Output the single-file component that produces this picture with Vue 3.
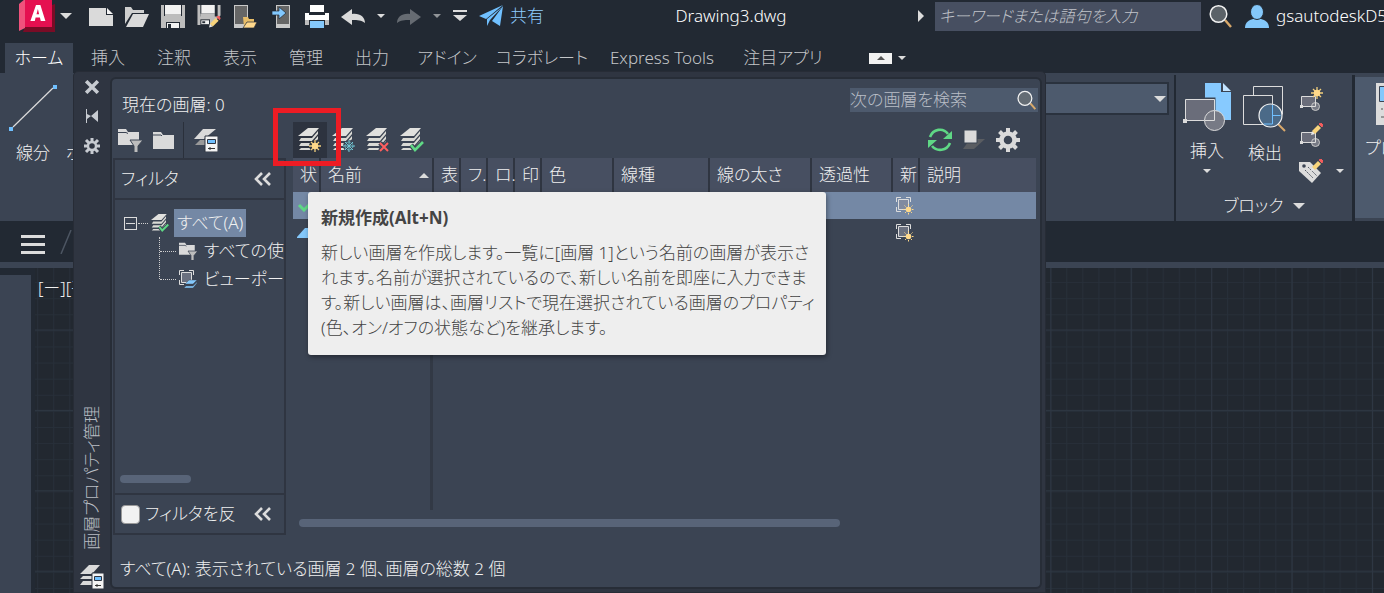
<script setup>
import { ref } from 'vue'

const files = ['new', 'open', 'save', 'saveas', 'devopen', 'device', 'print', 'undo']
const fileLabels = ['新規', '開く', '保存', '名前を付けて保存', 'モバイルから開く', 'モバイルに保存', '印刷', '元に戻す']
const tabs = ['挿入', '注釈', '表示', '管理', '出力', 'アドイン', 'コラボレート', 'Express Tools', '注目アプリ']
const columns = [
  { name: '状', cls: 'c-s' },
  { name: '名前', cls: 'c-name', sort: true },
  { name: '表', cls: 'c-s' },
  { name: 'フ.', cls: 'c-s' },
  { name: 'ロ.', cls: 'c-s' },
  { name: '印', cls: 'c-s' },
  { name: '色', cls: 'c-color' },
  { name: '線種', cls: 'c-type' },
  { name: '線の太さ', cls: 'c-weight' },
  { name: '透過性', cls: 'c-trans' },
  { name: '新', cls: 'c-s' },
  { name: '説明', cls: 'c-desc' }
]
const rows = [
  { icon: 'check', selected: true },
  { icon: 'layerblue', selected: false }
]
const invert = ref(false)
const query = ref('')
const layerQuery = ref('')
</script>

<template>
  <div class="app">
    <svg class="sprite" aria-hidden="true">
      <defs>
        <symbol id="caret" viewBox="0 0 12 6"><path d="M0 0h12L6 6z" fill="#dcdcdc" /></symbol>
        <symbol id="logo" viewBox="0 0 36 32">
          <path d="M33 5l3-1v28H4l2-5z" fill="#7a0c26" />
          <path d="M0 4l6-5v29l-6 3z" fill="#f0527c" />
          <path d="M6-1h27v28H6z" fill="#e51050" />
          <path d="M17 5h4.400l5 16h-4.600l-.9-3.500h-4.300L15.800 21h-4.400zM17.500 14.200h2.600L18.900 9z" fill="#fff" fill-rule="evenodd" />
        </symbol>
        <symbol id="new" viewBox="0 0 24 24"><path d="M0 4h17v7h7v11H0z" fill="#dadada" /><path d="M18 4l6 6h-6z" fill="#f4f4f4" /></symbol>
        <symbol id="open" viewBox="0 0 24 24"><path d="M0 3h6l2 3h11v3H7L0 20z" fill="#cfcfcf" /><path d="M8 10h16l-6 13H1z" fill="#dadada" /></symbol>
        <symbol id="save" viewBox="0 0 24 24"><path d="M0 1h3v12h18V1h3v24H0z" fill="#bdbdbd" /><path d="M4 1h16v9H4z" fill="#f2f2f2" /><path d="M4 10h16v2H4zM3 12h18v6H3z" fill="#bdbdbd" /><path d="M5 18h14v7H5z" fill="#232a33" /><path d="M6 19h12v5H6z" fill="#f2f2f2" /><path d="M7 20h3v4H7z" fill="#232a33" /></symbol>
        <symbol id="pencil" viewBox="0 0 12 12"><path d="M0 12l1-4 3 3z" fill="#e6e6e6" /><path d="M1 8l6-6 3 3-6 6z" fill="#f8d47c" /><path d="M8 1l2-1 2 2-1 2z" fill="#f45d5d" stroke="#f45d5d" /></symbol>
        <symbol id="saveas" viewBox="0 0 24 25"><path d="M0 1h3v12h18V1h3v11l-10 10H0z" fill="#bdbdbd" /><path d="M4 1h14v9H4z" fill="#f2f2f2" /><path d="M3 10h15v5H3z" fill="#bdbdbd" /><path d="M3 16h10v6H3z" fill="#232a33" /><path d="M4 17h8v4H4z" fill="#f2f2f2" /><path d="M5 18h3v2H5z" fill="#232a33" /><use href="#pencil" x="12" y="12" width="12" height="13" /></symbol>
        <symbol id="devopen" viewBox="0 0 24 24"><path d="M1 1h14v23H1z" fill="#c9c9c9" /><path d="M2 2h12v18H2z" fill="#666" /><path d="M10 13h5l1 2h5v3h-7l-3 5z" fill="#e8bd68" /><path d="M14 18h10l-3 6H10z" fill="#ffd88c" stroke="#232a33" stroke-width=".7" /></symbol>
        <symbol id="device" viewBox="0 0 24 24"><path d="M7 1h14v23H7z" fill="#c9c9c9" /><path d="M8 2h12v18H8z" fill="#666" /><path d="M3 7h7V3l7 6-7 6v-4H3z" fill="#82c8ff" stroke="#232a33" stroke-width=".7" /></symbol>
        <symbol id="print" viewBox="0 0 24 24"><path d="M5 1h14v7H5z" fill="#fff" /><path d="M0 9h4v2h16V9h4v8H0z" fill="#fff" /><path d="M0 16h24v5H0z" fill="#bdbdbd" /><path d="M4 16h16v10H4z" fill="#232a33" /><path d="M5 17h14v7H5z" fill="#84c8fb" /></symbol>
        <symbol id="undo" viewBox="0 0 24 24"><path d="M0 13l11-8v5c8-1 13 3 13 9-4-3-7-3-13-3v5z" fill="#dadada" /></symbol>
        <symbol id="redo" viewBox="0 0 24 24"><path d="M24 13L13 5v5C5 9 0 13 0 19c4-3 7-3 13-3v5z" fill="#666b72" /></symbol>
        <symbol id="custom" viewBox="0 0 14 12"><path d="M0 0h14v2H0zM0 5h14L7 11z" fill="#dcdcdc" /></symbol>
        <symbol id="plane" viewBox="0 0 24 22"><path d="M24 0L0 11l7 3zM23 2L8 14v7l3-6zM24 1L13 16l8 5z" fill="#70c0ff" /></symbol>
        <symbol id="mag" viewBox="0 0 24 24"><path d="M16 16l6 7" stroke="#d9a96b" stroke-width="2.400" /><circle cx="9.500" cy="10" r="8.300" fill="#6a7076" fill-opacity=".8" stroke="#f2f2f2" stroke-width="1.500" /></symbol>
        <symbol id="person" viewBox="0 0 24 24"><path d="M0 24c0-6 4-8 8-9h8c4 1 8 3 8 9z" fill="#84c8fb" /><ellipse cx="12" cy="8" rx="6.500" ry="7.500" fill="#84c8fb" stroke="#232a33" /></symbol>
        <symbol id="line" viewBox="0 0 48 48"><path d="M4 42L44 3" stroke="#dcdcdc" stroke-width="1.200" /><path d="M0 42h4v4H0zM44 0h4v4h-4z" fill="#70c0ff" /></symbol>
        <symbol id="insert" viewBox="0 0 48 48"><path d="M22 0h16v9h10v28H22z" fill="#87caff" /><path d="M40 0l8 8h-8z" fill="#c3e4ff" /><path d="M2 16h29v22H2z" fill="#6a6d7a" stroke="#3b4453" stroke-width="3" /><path d="M2.500 16.500h29v21h-29z" fill="#6a6d7a" stroke="#dcdcdc" /><circle cx="31.500" cy="37.500" r="10" fill="#777a85" stroke="#dcdcdc" /><path d="M31.500 28v9.500H22" fill="none" stroke="#dcdcdc" /><path d="M0 36h4v4H0z" fill="#dcdcdc" /></symbol>
        <symbol id="detect" viewBox="0 0 44 48"><path d="M10.500 10V1.500h29v28M.5 10.500h29v29H.5z" fill="none" stroke="#dcdcdc" /><path d="M34 38l8 8" stroke="#d9a96b" stroke-width="2" /><circle cx="27.500" cy="30.500" r="11.500" fill="#4b6a88" stroke="#f2f2f2" stroke-width="1.200" /><path d="M29.500 20v19H21M29.500 30.500h8" fill="none" stroke="#70c0ff" /></symbol>
        <symbol id="sun" viewBox="0 0 12 12"><path d="M6 0v12M0 6h12M2 2l8 8M10 2l-8 8" stroke="#f3cf7c" stroke-width="1.300" /><circle cx="6" cy="6" r="3.200" fill="#ffd98a" /></symbol>
        <symbol id="block" viewBox="0 0 24 24"><path d="M2.500 9.500h14v10h-14z" fill="#6a6d7a" stroke="#dcdcdc" /><circle cx="16.500" cy="19.500" r="4" fill="#777a85" stroke="#c8c8c8" /><path d="M16.500 14v5.500H12" fill="none" stroke="#dcdcdc" /><path d="M1 18h3v3H1z" fill="#dcdcdc" /></symbol>
        <symbol id="blocknew" viewBox="0 0 24 24"><use href="#block" width="24" height="24" /><use href="#sun" x="12" y="0" width="12" height="12" /></symbol>
        <symbol id="blockedit" viewBox="0 0 24 24"><use href="#block" x="0" y="0" width="24" height="24" /><use href="#pencil" x="12" y="0" width="12" height="12" /></symbol>
        <symbol id="tag" viewBox="0 0 24 24"><path d="M0 3h11l11 11-9 10L0 12z" fill="#dcdcdc" /><circle cx="5" cy="7" r="1.800" fill="#3b4453" /><path d="M6 11l8 8M9 8l9 9" stroke="#555b66" stroke-dasharray="2 1" /><use href="#pencil" x="12" y="0" width="12" height="12" /></symbol>
        <symbol id="prop" viewBox="0 0 24 42"><path d="M0 0h24v42H0z" fill="#dcdcdc" /><path d="M3.500 3.500H24v15H3.500z" fill="#84c8fb" stroke="#3b4453" /><path d="M5 26h2m2 0h8M5 34h8" stroke="#555" /></symbol>
        <symbol id="x" viewBox="0 0 12 12"><path d="M1 1l10 10M11 1L1 11" stroke="#c7cbd1" stroke-width="3" /></symbol>
        <symbol id="dock" viewBox="0 0 14 14"><path d="M1.500 0v14" stroke="#c7cbd1" /><path d="M2 5l4 2-4 3zM13 1v12L6 7z" fill="#c7cbd1" /></symbol>
        <symbol id="gear" viewBox="0 0 24 24"><path d="M12 0v24M0 12h24M3.500 3.500l17 17M20.500 3.500l-17 17" stroke="#dadada" stroke-width="4" /><circle cx="12" cy="12" r="6.500" fill="#3b4453" stroke="#dadada" stroke-width="4.500" /></symbol>
        <symbol id="gears" viewBox="0 0 16 16"><path d="M8 0v4M8 12v4M0 8h4M12 8h4M2 2l3 3M14 2l-3 3M2 14l3-3M14 14l-3-3" stroke="#c7cbd1" stroke-width="3" /><circle cx="8" cy="8" r="4" fill="#2f3541" stroke="#c7cbd1" stroke-width="2.400" /></symbol>
        <symbol id="folder" viewBox="0 0 24 24"><path d="M1 4h8l2 3h11v14H1z" fill="#dadada" /><path d="M1 7h8l1 1" fill="none" stroke="#3b4453" /></symbol>
        <symbol id="ffilter" viewBox="0 0 24 24"><path d="M0 1h8l2 3h11v13H0z" fill="#dadada" /><path d="M0 4.500h8l2 1" fill="none" stroke="#3b4453" /><path d="M12 12h13l-5 6v7h-4v-7z" fill="#bdbdbd" stroke="#3b4453" /></symbol>
        <symbol id="lprops" viewBox="0 0 24 24"><path d="M9 1h13L10 11H0z" fill="#dadada" /><path d="M6 12h7v5H1z" fill="#999" /><path d="M11 8h13v16H11z" fill="#f4f4f4" stroke="#2f3541" /><path d="M13.500 11.500h8v4h-8z" fill="#70c0ff" stroke="#2f3541" /><path d="M14 20.500h7M16 19v3" stroke="#333" /></symbol>
        <symbol id="layers" viewBox="0 0 24 24"><path d="M10 0h11l-7 8H0z" fill="#e1e1de" /><path d="M3 10h11l6-7v3l-6 7H1zM3 15h11l6-7v3l-6 7H1zM3 20h11l6-7v3l-6 6H1z" fill="#dadad5" /></symbol>
        <symbol id="snow" viewBox="0 0 12 12"><path d="M6 0v12M0 6h12M2 2l8 8M10 2l-8 8" stroke="#72c6d4" /><circle cx="6" cy="6" r="4" fill="none" stroke="#72c6d4" stroke-dasharray="2 1" /></symbol>
        <symbol id="lnew" viewBox="0 0 24 24"><use href="#layers" width="24" height="24" /><circle cx="17" cy="18" r="6" fill="#2f3541" /><use href="#sun" x="11" y="12" width="12" height="12" /></symbol>
        <symbol id="lsnow" viewBox="0 0 24 24"><use href="#layers" width="24" height="24" /><circle cx="17" cy="18" r="6" fill="#3b4453" /><use href="#snow" x="11" y="12" width="12" height="12" /></symbol>
        <symbol id="ldel" viewBox="0 0 24 24"><use href="#layers" width="24" height="24" /><path d="M14 15l8 8M22 15l-8 8" stroke="#3b4453" stroke-width="5" /><path d="M14 15l8 8M22 15l-8 8" stroke="#ff5f5f" stroke-width="2" /></symbol>
        <symbol id="lcur" viewBox="0 0 24 24"><use href="#layers" width="24" height="24" /><path d="M11 17l4 5 8-8" fill="none" stroke="#3b4453" stroke-width="5" /><path d="M11 17l4 5 8-8" fill="none" stroke="#5fd885" stroke-width="2.600" /></symbol>
        <symbol id="refresh" viewBox="0 0 24 24"><path d="M2 9C5 1 15-1 20 6M22 15c-3 8-13 9-18 3" fill="none" stroke="#5fd885" stroke-width="2.600" /><path d="M24 3v8h-9zM0 12h9l-9 8z" fill="#5fd885" /></symbol>
        <symbol id="lmode" viewBox="0 0 24 24"><path d="M8 11h15L12 21H1z" fill="#5a5d62" /><path d="M2 2h13v13H2z" fill="#dadada" stroke="#3b4453" /></symbol>
        <symbol id="chev" viewBox="0 0 18 14"><path d="M8 1L2 7l6 6M16 1l-6 6 6 6" fill="none" stroke="#dcdcdc" stroke-width="2.600" /></symbol>
        <symbol id="check" viewBox="0 0 18 12"><path d="M2 5l5 5 9-9" fill="none" stroke="#5fd885" stroke-width="3" /></symbol>
        <symbol id="layerblue" viewBox="0 0 18 12"><path d="M8 1h12l-8 10H-1z" fill="#84c8fb" /></symbol>
        <symbol id="vp" viewBox="0 0 18 18"><path d="M.5 5V.5H5M10 .5h4.500V5M.5 10v4.500H5" fill="none" stroke="#dcdcdc" /><path d="M2.500 2.500h10v10h-10z" fill="#8a8e9c" fill-opacity=".6" stroke="#dcdcdc" /></symbol>
        <symbol id="vpsun" viewBox="0 0 18 18"><use href="#vp" width="18" height="18" /><path d="M12.500 7v11M7 12.500h11M8.500 8.500l8 8M16.500 8.500l-8 8" stroke="#ffd98a" stroke-dasharray="1.500 1.500" /><circle cx="12.500" cy="12.500" r="2.800" fill="#ffd98a" /></symbol>
        <symbol id="vpl" viewBox="0 0 18 18"><use href="#vp" width="18" height="18" /><path d="M10 10h8l-4 4H6zM7 16h7l4-4v1l-4 5H5z" fill="#84c8fb" stroke="#3b4453" stroke-width=".4" /></symbol>
        <symbol id="lpal" viewBox="0 0 24 24"><path d="M9 0h11l-8 9H0zM3 11h9v3H0zM3 16h9v4H0z" fill="#dadada" /><path d="M12 8h12v16H12z" fill="#f4f4f4" stroke="#2f3541" /><path d="M14.500 11.500h7v4h-7z" fill="#70c0ff" stroke="#2f3541" /><path d="M15 20.500h6M17 19v3" stroke="#333" /></symbol>
      </defs>
    </svg>

    <header class="titlebar">
      <div class="quick">
        <button class="logo" aria-label="アプリケーション メニュー"><svg class="i-logo"><use href="#logo" /></svg><svg class="i-caret"><use href="#caret" /></svg></button>
        <button v-for="(f, i) in files" :key="f" :aria-label="fileLabels[i]"><svg class="i24"><use :href="'#' + f" /></svg></button>
        <button aria-label="元に戻す履歴"><svg class="i-caret-s"><use href="#caret" /></svg></button>
        <button aria-label="やり直し"><svg class="i24"><use href="#redo" /></svg></button>
        <button class="dim" aria-label="やり直し履歴"><svg class="i-caret-s"><use href="#caret" /></svg></button>
        <button aria-label="カスタマイズ"><svg class="i-custom"><use href="#custom" /></svg></button>
        <button class="share"><svg class="i24"><use href="#plane" /></svg>共有</button>
      </div>
      <div class="doc-title">Drawing3.dwg</div>
      <div class="account">
        <button class="expand" aria-label="展開"><svg viewBox="0 0 6 12"><path d="M0 0l6 6-6 6z" fill="#dcdcdc" /></svg></button>
        <input v-model="query" class="keyword" type="text" aria-label="キーワード検索" placeholder="キーワードまたは語句を入力">
        <button aria-label="検索"><svg class="i24"><use href="#mag" /></svg></button>
        <button class="user"><svg class="i24"><use href="#person" /></svg>gsautodeskD5</button>
      </div>
    </header>

    <nav class="tabs">
      <button class="active">ホーム</button>
      <button v-for="t in tabs" :key="t">{{ t }}</button>
      <button class="mini" aria-label="リボンを最小化"><span><svg class="up" viewBox="0 0 8 4"><path d="M4 0l4 4H0z" fill="#555" /></svg></span></button>
      <button class="mini2" aria-label="最小化オプション"><svg class="i-caret-s"><use href="#caret" /></svg></button>
    </nav>

    <section class="ribbon">
      <div class="draw">
        <button class="linebtn"><svg class="i48"><use href="#line" /></svg>線分</button>
        <button class="polybtn">ポリライン</button>
      </div>
      <div class="combo-area"><button class="combo" aria-label="画層"><svg class="i-caret"><use href="#caret" /></svg></button></div>
      <div class="block-panel">
        <div class="block-tools">
          <button class="big"><svg class="i48"><use href="#insert" /></svg>挿入<svg class="i-caret-s"><use href="#caret" /></svg></button>
          <button class="big det"><svg class="i-det"><use href="#detect" /></svg>検出</button>
          <div class="small">
            <button aria-label="ブロック作成"><svg class="i24"><use href="#blocknew" /></svg></button>
            <button aria-label="ブロック編集"><svg class="i24"><use href="#blockedit" /></svg></button>
            <button class="tagbtn" aria-label="属性編集"><svg class="i24"><use href="#tag" /></svg><svg class="i-caret-s"><use href="#caret" /></svg></button>
          </div>
        </div>
        <button class="panel-title">ブロック<svg class="i-caret"><use href="#caret" /></svg></button>
      </div>
      <button class="prop"><svg class="i-prop"><use href="#prop" /></svg>プロパティ</button>
    </section>

    <div class="doc-tabs">
      <button aria-label="ファイル タブ メニュー"><span class="burger"><i></i><i></i><i></i></span></button>
      <svg class="slash" viewBox="0 0 12 24"><path d="M1 24L11 0" stroke="#4d5663" stroke-width="1.500" /></svg>
    </div>
    <main class="work">
      <aside class="side"></aside>
      <div class="canvas">
        <svg class="grid" aria-hidden="true">
          <defs>
            <pattern id="gmin" x="2.100" y="-2" width="16.080" height="16.100" patternUnits="userSpaceOnUse"><path d="M0 .5h16.100M.5 0v16.100" stroke="#272f39" /></pattern>
            <pattern id="gmaj" x="50.600" y="61.500" width="80.400" height="80.400" patternUnits="userSpaceOnUse"><path d="M0 .5h80.400M.5 0v80.400" stroke="#2e3743" /></pattern>
          </defs>
          <rect width="100%" height="100%" fill="url(#gmin)" /><rect width="100%" height="100%" fill="url(#gmaj)" />
        </svg>
        <span class="viewlabel">[ー][平面図]</span>
      </div>
    </main>

    <section class="palette">
      <div class="rail">
        <button aria-label="閉じる"><svg class="i-x"><use href="#x" /></svg></button>
        <button aria-label="自動的に隠す"><svg class="i-x"><use href="#dock" /></svg></button>
        <button aria-label="プロパティ"><svg class="i16"><use href="#gears" /></svg></button>
        <span class="rail-title">画層プロパティ管理</span>
        <svg class="i24"><use href="#lpal" /></svg>
      </div>
      <div class="pbody">
        <div class="current">
          <span>現在の画層: 0</span>
          <label class="lsearch"><input v-model="layerQuery" type="text" aria-label="画層を検索" placeholder="次の画層を検索"><svg class="i-mag"><use href="#mag" /></svg></label>
        </div>
        <div class="ptools">
          <div class="tl">
            <button aria-label="新規プロパティ フィルタ"><svg class="i24"><use href="#ffilter" /></svg></button>
            <button aria-label="新規グループ フィルタ"><svg class="i24"><use href="#folder" /></svg></button>
            <span class="vsep"></span>
            <button aria-label="画層状態管理"><svg class="i24"><use href="#lprops" /></svg></button>
          </div>
          <div class="tm">
            <button class="hot" aria-label="新規作成"><svg class="i24"><use href="#lnew" /></svg></button>
            <button aria-label="すべてのビューポートでフリーズ"><svg class="i24"><use href="#lsnow" /></svg></button>
            <button aria-label="画層を削除"><svg class="i24"><use href="#ldel" /></svg></button>
            <button aria-label="現在に設定"><svg class="i24"><use href="#lcur" /></svg></button>
          </div>
          <div class="tr">
            <button aria-label="更新"><svg class="i24"><use href="#refresh" /></svg></button>
            <button aria-label="画層モード"><svg class="i24"><use href="#lmode" /></svg></button>
            <button aria-label="設定"><svg class="i24"><use href="#gear" /></svg></button>
          </div>
        </div>
        <div class="pmain">
          <div class="filters">
            <div class="fhead">フィルタ<button aria-label="折りたたむ"><svg class="i-chev"><use href="#chev" /></svg></button></div>
            <div class="tree">
              <div class="node root"><span class="minus"></span><span class="dots"></span><svg class="i18"><use href="#lcur" /></svg><b>すべて(A)</b></div>
              <div class="kids">
                <div class="node"><span class="dots"></span><svg class="i18"><use href="#ffilter" /></svg><span>すべての使用中の画層</span></div>
                <div class="node"><span class="dots"></span><svg class="i18"><use href="#vpl" /></svg><span>ビューポート優先</span></div>
              </div>
              <div class="fscroll"></div>
            </div>
            <div class="ffoot"><label><input v-model="invert" type="checkbox">フィルタを反</label><button aria-label="フィルタを折りたたむ"><svg class="i-chev"><use href="#chev" /></svg></button></div>
          </div>
          <div class="list">
            <table>
              <thead><tr><th v-for="(c, i) in columns" :key="i" :class="c.cls"><div>{{ c.name }}<svg v-if="c.sort" class="sort" viewBox="0 0 10 5"><path d="M5 0l5 5H0z" fill="#dcdcdc" /></svg></div></th></tr></thead>
              <tbody>
                <tr v-for="r in rows" :key="r.icon" :class="{ sel: r.selected }">
                  <td><svg class="i-st"><use :href="'#' + r.icon" /></svg></td>
                  <td v-for="n in 9" :key="n"></td>
                  <td><svg class="i18"><use href="#vpsun" /></svg></td><td></td>
                </tr>
              </tbody>
            </table>
            <div class="rest"></div>
            <div class="hscroll"><div></div></div>
          </div>
        </div>
        <footer class="status">すべて(A): 表示されている画層 2 個、画層の総数 2 個</footer>
      </div>
    </section>

    <div class="highlight"></div>
    <div class="tip" role="tooltip">
      <h2>新規作成(Alt+N)</h2>
      <p>新しい画層を作成します。一覧に[画層 1]という名前の画層が表示さ<br>れます。名前が選択されているので、新しい名前を即座に入力できま<br>す。新しい画層は、画層リストで現在選択されている画層のプロパティ<br>(色、オン/オフの状態など)を継承します。</p>
    </div>
  </div>
</template>

<style>
body { background: #222933; }
</style>

<style scoped>
.app, .app * { box-sizing: border-box; }
.app {
  position: relative; min-height: 100vh; overflow: hidden; display: flex; flex-direction: column;
  background: #222933; color: #f0f0f0; font-family: "Noto Sans", "Noto Sans CJK JP", sans-serif;
  font-size: 17px; font-weight: 300; line-height: 24px; font-feature-settings: "palt"; white-space: nowrap;
}
.sprite { position: absolute; width: 0; height: 0; }
svg { display: block; flex: none; }
button { border: 0; background: none; padding: 0; margin: 0; color: inherit; font: inherit; font-feature-settings: inherit; display: flex; align-items: center; white-space: nowrap; }
input { font: inherit; font-feature-settings: inherit; }
.i24 { width: 24px; height: 24px; }
.i48 { width: 48px; height: 48px; }
.i16 { width: 16px; height: 16px; }
.i18 { width: 18px; height: 18px; }
.i-x { width: 14px; height: 14px; }
.i-caret { width: 12px; height: 6px; }
.i-caret-s { width: 8px; height: 4px; }
.i-custom { width: 14px; height: 12px; }
.i-logo { width: 36px; height: 32px; }
.i-det { width: 44px; height: 48px; }
.i-prop { width: 24px; height: 42px; }
.i-mag { width: 20px; height: 20px; }
.i-chev { width: 18px; height: 14px; }
.i-st { width: 18px; height: 12px; }

.titlebar { height: 43px; padding-bottom: 11px; display: flex; align-items: center; }
.quick { display: flex; align-items: center; gap: 12px; padding-left: 19px; }
.logo { gap: 5px; margin-right: 5px; }
.dim { opacity: .6; }
.share { gap: 7px; color: #8fccff; }
.doc-title { flex: 1; text-align: center; font-size: 17px; color: #fff; }
.account { display: flex; align-items: center; width: 466px; overflow: hidden; }
.account > * { flex: none; }
.expand svg { width: 6px; height: 12px; }
.keyword { width: 266px; height: 29px; margin: 0 8px 0 11px; padding: 0 4px; border: 0; background: #474f61; color: #ddd; font-style: italic; font-size: 16px; }
.keyword::placeholder { color: #c2c5cb; opacity: 1; }
.user { gap: 7px; margin-left: 12px; color: #fff; }

.tabs { height: 30px; padding-left: 5px; display: grid; grid-template-columns: 70px repeat(5, 66px) 84px 106px 134px 108px 55px 20px; color: #c4c6c9; }
.tabs button { justify-content: center; height: 30px; }
.tabs .active { width: 68px; background: #3b4453; color: #fff; }
.tabs .mini { justify-content: flex-end; }
.mini span { width: 23px; height: 11px; background: #f2f2f2; display: flex; align-items: center; justify-content: center; }
.up { width: 8px; height: 4px; }

.ribbon { height: 148px; background: #3b4453; display: flex; }
.draw { display: flex; align-items: flex-start; padding: 12px 0 0 9px; gap: 9px; }
.linebtn, .big { flex-direction: column; gap: 8px; }
.polybtn { margin-top: 56px; }
.combo-area { flex: 1; display: flex; align-items: flex-start; padding: 9px 5px 0 0; }
.combo { flex: 1; height: 33px; background: #4d5a6d; border: 2px solid #2a323e; justify-content: flex-end; padding-right: 1px; }
.block-panel { width: 181px; border-left: 2px solid #222933; border-right: 3px solid #222933; margin-top: 2px; display: flex; flex-direction: column; justify-content: space-between; }
.block-tools { display: flex; align-items: flex-start; padding: 8px 0 0 7px; gap: 12px; }
.big .i-caret-s { margin-top: -2px; }
.det { padding-top: 2px; }
.small { display: flex; flex-direction: column; gap: 12px; padding-top: 4px; }
.tagbtn { gap: 13px; }
.panel-title { justify-content: center; gap: 9px; height: 30px; }
.prop { width: 29px; margin: 4px 0 3px; padding: 6px 0 0 10px; background: #4d5a6d; flex-direction: column; align-items: flex-start; gap: 11px; overflow: hidden; }
.prop .i-prop { margin-left: 11px; }

.doc-tabs { height: 41px; display: flex; align-items: center; padding-left: 21px; gap: 15px; }
.burger { display: flex; flex-direction: column; gap: 5px; padding-top: 5px; }
.burger i { width: 24px; height: 3px; background: #dcdcdc; }
.slash { width: 12px; height: 24px; }
.work { flex: 1; display: flex; border-top: 6px solid #3b4453; }
.side { width: 31px; margin-top: 7px; margin-right: 4px; background: #3b4453; box-shadow: 0 -4px #222933; }
.canvas { position: relative; flex: 1; background: #222830; }
.grid { position: absolute; width: 100%; height: 100%; }
.viewlabel { position: absolute; left: 3px; top: 8px; }

.palette { position: absolute; left: 73px; right: 338px; top: 71px; bottom: 0; background: #2f3541; border: 1px solid #272c36; border-radius: 5px 5px 0 0; display: flex; padding: 5px 3px 3px 0; }
.rail { width: 36px; display: flex; flex-direction: column; align-items: center; gap: 15px; padding-top: 3px; }
.rail-title { writing-mode: vertical-rl; text-orientation: sideways; transform: rotate(180deg); color: #b9bdc4; margin-top: auto; }
.pbody { flex: 1; min-width: 0; background: #3b4453; border: 2px solid #272d37; border-radius: 6px; display: flex; flex-direction: column; }
.current { display: flex; justify-content: space-between; align-items: flex-start; height: 42px; padding: 9px 2px 0 10px; }
.current > span { padding-top: 5px; }
.lsearch { display: flex; align-items: center; width: 188px; height: 24px; background: #4d5a6d; padding-right: 1px; }
.lsearch input { flex: 1; min-width: 0; border: 0; padding: 0; background: none; color: #ddd; }
.lsearch input::placeholder { color: #b9bec6; opacity: 1; }
.ptools { display: flex; height: 37px; align-items: center; padding: 0 20px 0 6px; }
.tl, .tm, .tr { display: flex; align-items: center; height: 100%; }
.tl { width: 175px; gap: 10px; }
.vsep { width: 1px; height: 36px; background: #2a303b; margin-left: -3px; }
.tm button { width: 34px; height: 36px; justify-content: center; }
.tm .hot { background: #2d333f; }
.tr { margin-left: auto; gap: 10px; }
.pmain { flex: 1; min-height: 0; display: flex; gap: 7px; padding: 0 4px 0 1px; }
.filters { width: 173px; border: 2px solid #2f3541; display: flex; flex-direction: column; overflow: hidden; }
.fhead { height: 40px; display: flex; align-items: center; justify-content: space-between; padding: 0 12px 0 6px; border-bottom: 2px solid #2f3541; }
.tree { flex: 1; min-height: 0; display: flex; flex-direction: column; padding: 9px 0 0 9px; overflow: hidden; }
.node { display: flex; align-items: center; height: 28px; }
.node b { font-weight: inherit; background: #7488a5; padding: 2px 3px; margin-left: 5px; }
.node .dots { flex: none; width: 10px; margin: 0 3px 0 1px; border-top: 1px dotted #d0d0d0; }
.minus { width: 13px; height: 13px; border: 1px solid #dcdcdc; display: flex; align-items: center; justify-content: center; }
.minus::after { content: ""; width: 9px; height: 1px; background: #dcdcdc; }
.kids { margin-left: 35px; position: relative; }
.kids::before { content: ""; position: absolute; left: 0; top: 0; height: 42px; border-left: 1px dotted #d0d0d0; }
.kids .dots { width: 16px; }
.kids .node span:last-child { margin-left: 7px; }
.fscroll { width: 71px; height: 8px; border-radius: 4px; background: #586478; margin: auto 0 10px -4px; }
.ffoot { height: 40px; border-top: 2px solid #2f3541; display: flex; align-items: center; justify-content: space-between; padding: 0 12px 0 6px; }
.ffoot label { display: flex; align-items: center; gap: 5px; }
.ffoot input { appearance: none; width: 19px; height: 19px; margin: 0; background: #f2f2f2; border: 1px solid #999; border-radius: 4px; }
.list { flex: 1; min-width: 0; display: flex; flex-direction: column; }
table { width: 100%; table-layout: fixed; border-collapse: collapse; }
th { height: 34px; padding: 0 0 0 7px; font-weight: inherit; text-align: left; background: #474f61; border-right: 2px solid #2f3541; }
th:last-child { border-right: 0; }
th div { display: flex; align-items: center; justify-content: space-between; padding-right: 3px; }
.c-s { width: 27px; }
.c-s div { padding: 0; }
.c-name { width: 113px; }
.c-color { width: 72px; }
.c-type { width: 96px; }
.c-weight { width: 102px; }
.c-trans { width: 81px; }
.sort { width: 10px; height: 5px; }
td { height: 27px; padding: 0 0 0 4px; }
.sel { background: #7488a5; }
.rest { flex: 1; width: 140px; border-right: 3px solid #323945; }
.hscroll { padding: 9px 6px 8px; }
.hscroll div { width: 74%; height: 8px; border-radius: 4px; background: #586478; }
.status { height: 52px; padding: 16px 8px 0; display: flex; align-items: center; }

.highlight { position: absolute; left: 273px; top: 108px; width: 68px; height: 58px; border: 5px solid #ed1c24; pointer-events: none; }
.tip { position: absolute; left: 308px; top: 192px; padding: 13px 16px 15px 13px; width: 518px; border-radius: 3px; background: #eee; color: #444; box-shadow: 1px 2px 5px rgba(0, 0, 0, .4); }
.tip h2 { margin: 0 0 9px; font-size: 17px; line-height: 26px; color: #444; }
.tip p { margin: 0; line-height: 25px; }
</style>
